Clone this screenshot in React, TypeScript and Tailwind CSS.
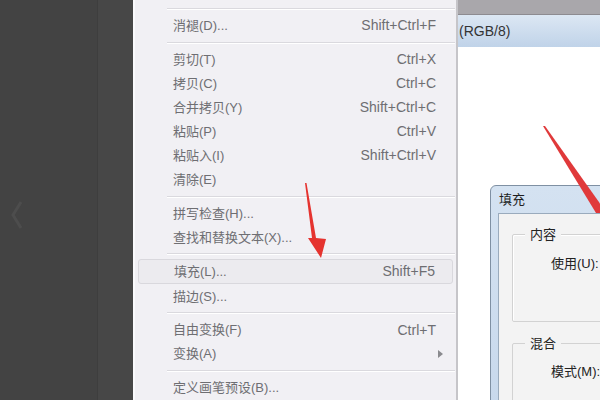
import React from "react";

type Item = { label: string; shortcut?: string; sep?: false; hl?: boolean; sub?: boolean };
type Row = Item | { sep: true };

const rows: Row[] = [
  { sep: true },
  { label: "消褪(D)...", shortcut: "Shift+Ctrl+F" },
  { sep: true },
  { label: "剪切(T)", shortcut: "Ctrl+X" },
  { label: "拷贝(C)", shortcut: "Ctrl+C" },
  { label: "合并拷贝(Y)", shortcut: "Shift+Ctrl+C" },
  { label: "粘贴(P)", shortcut: "Ctrl+V" },
  { label: "粘贴入(I)", shortcut: "Shift+Ctrl+V" },
  { label: "清除(E)" },
  { sep: true },
  { label: "拼写检查(H)..." },
  { label: "查找和替换文本(X)..." },
  { sep: true },
  { label: "填充(L)...", shortcut: "Shift+F5", hl: true },
  { label: "描边(S)..." },
  { sep: true },
  { label: "自由变换(F)", shortcut: "Ctrl+T" },
  { label: "变换(A)", sub: true },
  { sep: true },
  { label: "定义画笔预设(B)..." },
];

const font = { fontFamily: '"Liberation Sans", "Noto Sans CJK SC", sans-serif' };

export default function App() {
  return (
    <div
      className="relative flex h-[400px] w-[600px] overflow-hidden bg-[#434343] text-[13px]"
      style={font}
    >
      {/* left dark panel */}
      <div className="flex h-full w-[97px] items-center bg-[#434343] pl-[8px]">
        <svg width="16" height="32" viewBox="0 0 16 32" className="mt-[30px]">
          <path d="M13 3 L5 16 L13 29" fill="none" stroke="#4d4d4d" strokeWidth="3" />
        </svg>
      </div>
      <div className="h-full w-[36px] border-l border-[#3e3e3e] bg-[#474747]" />

      {/* menu */}
      <div className="flex h-full w-[323px] flex-col border-l-2 border-[#fafafc] bg-[#f1f0f4] pt-[4px] text-[#6e6e72]">
        {rows.map((r, i) =>
          "sep" in r && r.sep ? (
            <div key={i} className="flex h-[10px] flex-col justify-center pl-[32px] pr-[1px]">
              <div className="h-px bg-[#dad9de]" />
              <div className="h-px bg-white" />
            </div>
          ) : (
            <div
              key={i}
              className={
                (r as Item).hl
                  ? "mx-[3px] flex h-[25px] shrink-0 items-center justify-between rounded-[3px] border border-[#d9d8dd] bg-[#ecebef] pl-[35px] pr-[17px]"
                  : "flex h-[24px] shrink-0 items-center justify-between pl-[38px] pr-[20px]"
              }
            >
              <span>{(r as Item).label}</span>
              {(r as Item).shortcut && <span className="text-[14px]">{(r as Item).shortcut}</span>}
              {(r as Item).sub && (
                <svg width="6" height="8" viewBox="0 0 6 8" className="-mr-[8px]">
                  <path d="M0 0 L5 4 L0 8 Z" fill="#8a8a8e" />
                </svg>
              )}
            </div>
          )
        )}
      </div>

      {/* window behind */}
      <div className="relative flex h-full flex-1 flex-col border-l-2 border-[#c6c5c9] bg-white">
        <div className="h-[15px] border-b border-[#8d8b90] bg-[#a9a7ab]" />
        <div className="flex h-[32px] items-center bg-gradient-to-b from-[#dce7f3] to-[#c0d3e9] pl-[1px] text-[14px] text-[#333]">
          (RGB/8)
        </div>
        <div className="flex-1 bg-white" />

        {/* fill dialog */}
        <div className="absolute left-[32px] top-[185px] flex h-[240px] w-[140px] flex-col rounded-tl-[6px] border border-[#7f90a3] bg-gradient-to-b from-[#d4e2f1] to-[#c7d8ec] pl-[7px]">
          <div className="flex h-[30px] items-center pl-[1px] text-[13px] text-[#1e1e1e]">填充</div>
          <div className="flex flex-1 flex-col border border-[#9aabbd] bg-[#f3f3f3] pl-[13px] pt-[20px] text-[13px] text-[#222]">
            <div className="relative h-[88px] rounded-[2px] border border-[#d2d2d2] shadow-[inset_1px_1px_0_#fff]">
              <span className="absolute -top-[10px] left-[12px] bg-[#f3f3f3] px-[5px]">内容</span>
              <div className="pl-[38px] pt-[19px]">使用(U):</div>
            </div>
            <div className="relative mt-[21px] h-[80px] rounded-[2px] border border-[#d2d2d2]">
              <span className="absolute -top-[10px] left-[12px] bg-[#f3f3f3] px-[5px]">混合</span>
              <div className="pl-[38px] pt-[18px]">模式(M):</div>
            </div>
          </div>
        </div>
      </div>

      {/* red arrows overlay */}
      <svg className="pointer-events-none absolute left-0 top-0" width="600" height="400" viewBox="0 0 600 400">
        <polygon points="305,183 306.5,183 316,238 326,239 321,258 308,238 312,238" fill="#e5332f" />
        <polygon points="543,126 545,126 601,205 601,213 596,213" fill="#e0393a" />
      </svg>
    </div>
  );
}
